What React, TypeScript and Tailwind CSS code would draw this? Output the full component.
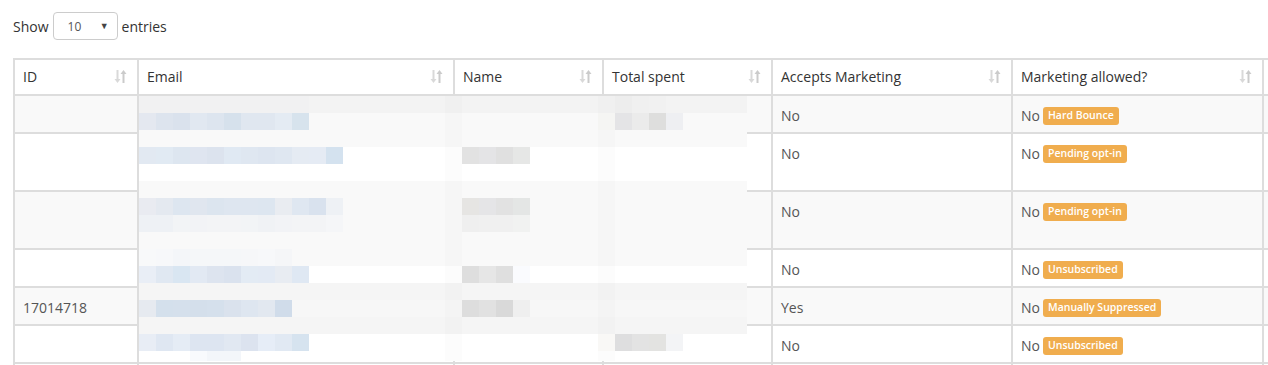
import React from "react";

const gridCols = "grid grid-cols-[124px_316px_149px_169px_240px_251px_60px]";

type Row = { id: string; accepts: string; badge: string; tall?: boolean; striped: boolean };

const rows: Row[] = [
  { id: "", accepts: "No", badge: "Hard Bounce", striped: true },
  { id: "", accepts: "No", badge: "Pending opt-in", tall: true, striped: false },
  { id: "", accepts: "No", badge: "Pending opt-in", tall: true, striped: true },
  { id: "", accepts: "No", badge: "Unsubscribed", striped: false },
  { id: "17014718", accepts: "Yes", badge: "Manually Suppressed", striped: true },
  { id: "", accepts: "No", badge: "Unsubscribed", striped: false },
];

// pixelated redaction strip: 17px blocks
type Band = { bg: string; h?: number; blocks: [number, string][] };
const run = (start: number, colors: string[]): [number, string][] =>
  colors.map((c, i) => [start + i, c]);

const bands: Band[] = [
  { bg: "#f3f3f3", blocks: [...run(0, Array(10).fill("#f1f1f2")), ...run(28, ["#ededed", "#f0f0f0", "#f1f1f1"])] },
  {
    bg: "#f9f9f9",
    blocks: [
      ...run(0, ["#e4e8f0", "#dde4ee", "#dae2ed", "#e1e8f1", "#dde5ef", "#d6e1ec", "#e0e7f0", "#e0e7f0", "#e4ebf3", "#d7e3ed"]),
      ...run(27, ["#f5f5f3", "#e4e4e6", "#ebebeb", "#dededd", "#eeeff2"]),
    ],
  },
  { bg: "#f9f9f9", blocks: [] },
  {
    bg: "#ffffff",
    blocks: [
      ...run(0, ["#e2e9f2", "#e1eaf3", "#dde6f0", "#dfe5f0", "#dce3ee", "#e0e9f3", "#dfe7f1", "#dde5f0", "#dfe7f1", "#e5ebf3", "#e5ebf4", "#d4e2ef"]),
      ...run(19, ["#e2e2e2", "#e4e4e6", "#e0e0e0", "#e6e7e6"]),
    ],
  },
  { bg: "#ffffff", blocks: [] },
  { bg: "#f9f9f9", blocks: [] },
  {
    bg: "#f9f9f9",
    blocks: [
      ...run(0, ["#e9ebf1", "#e4e9f0", "#dde6f0", "#e0e6ef", "#dce5ef", "#dee6f0", "#dee6f0", "#dde6f0", "#e9ecf1", "#dfe7f1", "#d9e2ee", "#eef1f5"]),
      ...run(19, ["#e6e5e3", "#e5e5e7", "#e2e2e2", "#e4e6e5"]),
    ],
  },
  {
    bg: "#f9f9f9",
    blocks: [
      ...run(0, ["#eef1f5", "#eef1f5", "#f2f4f6", "#f2f3f6", "#f3f4f6", "#f3f4f6", "#f2f4f6", "#f0f2f5", "#f2f3f6", "#f3f4f6", "#f3f4f6", "#f5f6f8"]),
      ...run(19, ["#efefef", "#f0f0f0", "#f0f0f0", "#f1f2f1"]),
    ],
  },
  { bg: "#f9f9f9", blocks: [] },
  { bg: "#f9f9f9", blocks: run(0, ["#f8f9fa", "#f7f8fa", "#f4f6f9", "#f5f7f9", "#f5f7f9", "#f5f7f9", "#f6f7f9", "#f7f8fa", "#f5f6f8"]) },
  {
    bg: "#ffffff",
    blocks: [
      ...run(0, ["#e9eef6", "#e0e8f2", "#d9e6f2", "#e2e9f3", "#dde4ef", "#dae2ee", "#e3ebf4", "#e3eaf4", "#e8ecf2", "#dfe8f3"]),
      ...run(19, ["#dedede", "#e6e6e6", "#dfdfdf", "#fafbfe"]),
    ],
  },
  { bg: "#f5f5f5", blocks: [] },
  {
    bg: "#f7f7f7",
    blocks: [
      ...run(0, ["#e6eaf0", "#d4e0ec", "#d5e0ec", "#d4dfeb", "#d5e0ec", "#dae2ed", "#dee6f0", "#e2e8f0", "#d0dcea"]),
      ...run(19, ["#dddddd", "#e1e1e1", "#d9d9d9", "#efefef"]),
    ],
  },
  { bg: "#f5f5f5", blocks: [] },
  {
    bg: "#ffffff",
    blocks: [
      ...run(0, ["#e8edf5", "#dfe7f2", "#e5ecf5", "#dde5f1", "#dde5f1", "#e1e8f2", "#dce3ef", "#e6edf7", "#e1e9f3", "#d6e3ef"]),
      ...run(27, ["#f9f8f6", "#dededf", "#e3e3e3", "#e3e3e1", "#f3f4f6"]),
    ],
  },
  { bg: "#ffffff", h: 10, blocks: run(3, ["#f8fafd", "#f3f6fa", "#f3f6fa"]) },
];

function Redaction() {
  let y = 0;
  return (
    <svg width="608" height="265" viewBox="0 0 608 265" className="absolute left-[126px] top-[38px]">
      {bands.map((b, i) => {
        const h = b.h ?? 17;
        const top = y;
        y += h;
        return (
          <g key={i}>
            <rect x="0" y={top} width="608" height={h} fill={b.bg} />
            <rect x={18 * 17} y={top} width="17" height={h} fill="#000" opacity="0.012" />
            <rect x={27 * 17} y={top} width="17" height={h} fill="#000" opacity="0.012" />
            {b.blocks.map(([c, col]) => (
              <rect key={c} x={c * 17} y={top} width="17" height={h} fill={col} />
            ))}
          </g>
        );
      })}
    </svg>
  );
}

function SortIcon() {
  return (
    <svg width="13" height="15" viewBox="0 0 13 15" className="shrink-0">
      <path d="M3.5 1v11" stroke="#d9d9d9" strokeWidth="2" />
      <path d="M0.5 10l3 4 3-4z" fill="#d9d9d9" />
      <path d="M9.5 14V3" stroke="#cbcbcb" strokeWidth="2" />
      <path d="M6.5 5l3-4 3 4z" fill="#cbcbcb" />
    </svg>
  );
}

const headers = ["ID", "Email", "Name", "Total spent", "Accepts Marketing", "Marketing allowed?", ""];

export default function App() {
  return (
    <div className="h-[365px] w-[1268px] overflow-hidden bg-white font-['Open_Sans',sans-serif] text-[14px] text-[#333]">
      <div className="flex items-center gap-1 pl-[13px] pt-3">
        <span>Show</span>
        <div className="flex h-7 w-[65px] items-center justify-between rounded border border-[#cccccc] pl-[14px] pr-2 text-[12px] text-[#555]">
          <span className="pt-[2px]">10</span>
          <span className="text-[9px] text-[#444]">▼</span>
        </div>
        <span>entries</span>
      </div>

      <div className="relative ml-[13px] mt-[18px] w-max">
        <div className={`${gridCols} h-[38px] border-t-2 border-b-2 border-[#dddddd] bg-white`}>
          {headers.map((h, i) => (
            <div key={i} className="flex items-center justify-between border-l-2 border-[#dddddd] pb-[2px] pl-2 pr-[10px]">
              <span>{h}</span>
              {h && <SortIcon />}
            </div>
          ))}
        </div>
        {rows.map((r, ri) => (
          <div
            key={ri}
            className={`${gridCols} border-b-2 border-[#dddddd] text-[#555] ${r.tall ? "h-[58px]" : "h-[38px]"} ${r.striped ? "bg-[#f9f9f9]" : "bg-white"}`}
          >
            <div className="border-l-2 border-[#dddddd] px-2 py-[10px] leading-5">{r.id}</div>
            <div className="border-l-2 border-[#dddddd]" />
            <div className="border-l-2 border-[#dddddd]" />
            <div className="border-l-2 border-[#dddddd]" />
            <div className="border-l-2 border-[#dddddd] px-2 py-[10px] leading-5">{r.accepts}</div>
            <div className="flex items-start gap-[3px] border-l-2 border-[#dddddd] px-2 py-[10px] leading-5">
              <span>No</span>
              <span className="mt-[1px] rounded-[3px] bg-[#f0ad4e] px-[5px] pb-[2px] pt-[1px] text-[10.5px] font-semibold leading-[15px] text-white">
                {r.badge}
              </span>
            </div>
            <div className="border-l-2 border-[#dddddd]" />
          </div>
        ))}
        <Redaction />
      </div>
    </div>
  );
}
